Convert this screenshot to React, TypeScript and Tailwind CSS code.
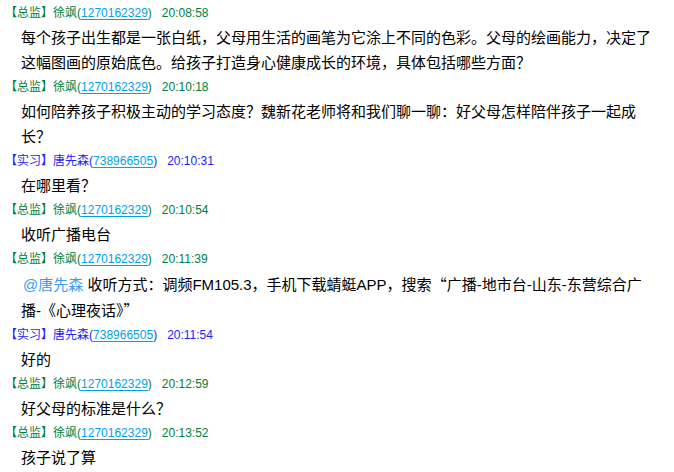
import React from "react";

type Msg = {
  role: "总监" | "实习";
  name: string;
  qq: string;
  time: string;
  at?: string;
  text: React.ReactNode;
};

const msgs: Msg[] = [
  {
    role: "总监",
    name: "徐飒",
    qq: "1270162329",
    time: "20:08:58",
    text: "每个孩子出生都是一张白纸，父母用生活的画笔为它涂上不同的色彩。父母的绘画能力，决定了这幅图画的原始底色。给孩子打造身心健康成长的环境，具体包括哪些方面？",
  },
  {
    role: "总监",
    name: "徐飒",
    qq: "1270162329",
    time: "20:10:18",
    text: "如何陪养孩子积极主动的学习态度？魏新花老师将和我们聊一聊：好父母怎样陪伴孩子一起成长？",
  },
  { role: "实习", name: "唐先森", qq: "738966505", time: "20:10:31", text: "在哪里看？" },
  { role: "总监", name: "徐飒", qq: "1270162329", time: "20:10:54", text: "收听广播电台" },
  {
    role: "总监",
    name: "徐飒",
    qq: "1270162329",
    time: "20:11:39",
    at: "@唐先森",
    text: (
      <>
        收听方式：调频FM105.3，手机下载蜻蜓APP，搜索
        <span className="font-['Noto_Sans_CJK_SC',sans-serif] leading-[25px]">“</span>
        广播-地市台-山东-东营综合广播-《心理夜话》
        <span className="font-['Noto_Sans_CJK_SC',sans-serif] leading-[25px]">”</span>
      </>
    ),
  },
  { role: "实习", name: "唐先森", qq: "738966505", time: "20:11:54", text: "好的" },
  { role: "总监", name: "徐飒", qq: "1270162329", time: "20:12:59", text: "好父母的标准是什么？" },
  { role: "总监", name: "徐飒", qq: "1270162329", time: "20:13:52", text: "孩子说了算" },
];

function Header({ m }: { m: Msg }) {
  const green = m.role === "总监";
  return (
    <div
      className={
        "h-[24px] flex items-center pl-[5px] text-[12px] whitespace-nowrap font-['Liberation_Sans','Noto_Sans_CJK_SC',sans-serif] " +
        (green ? "text-[#008040]" : "text-[#2323f5]")
      }
    >
      <span>【{m.role}】</span>
      <span>{m.name}(</span>
      <span className="text-[#00a2e8] underline underline-offset-[2px]">{m.qq}</span>
      <span>)</span>
      <span className="ml-[10px]">{m.time}</span>
    </div>
  );
}

export default function App() {
  return (
    <div
      className="w-[674px] h-[472px] overflow-hidden bg-white pt-[1px] font-['Liberation_Sans','Noto_Sans_CJK_SC',sans-serif]"
      lang="zh-CN"
    >
      {msgs.map((m, i) => (
        <div key={i}>
          <Header m={m} />
          <div className="pl-[21px] pr-[16px] text-[15px] leading-[25px] text-black">
            {m.at && <span className="text-[#3d9bf0] ml-[2px]">{m.at} </span>}
            {m.text}
          </div>
        </div>
      ))}
    </div>
  );
}
